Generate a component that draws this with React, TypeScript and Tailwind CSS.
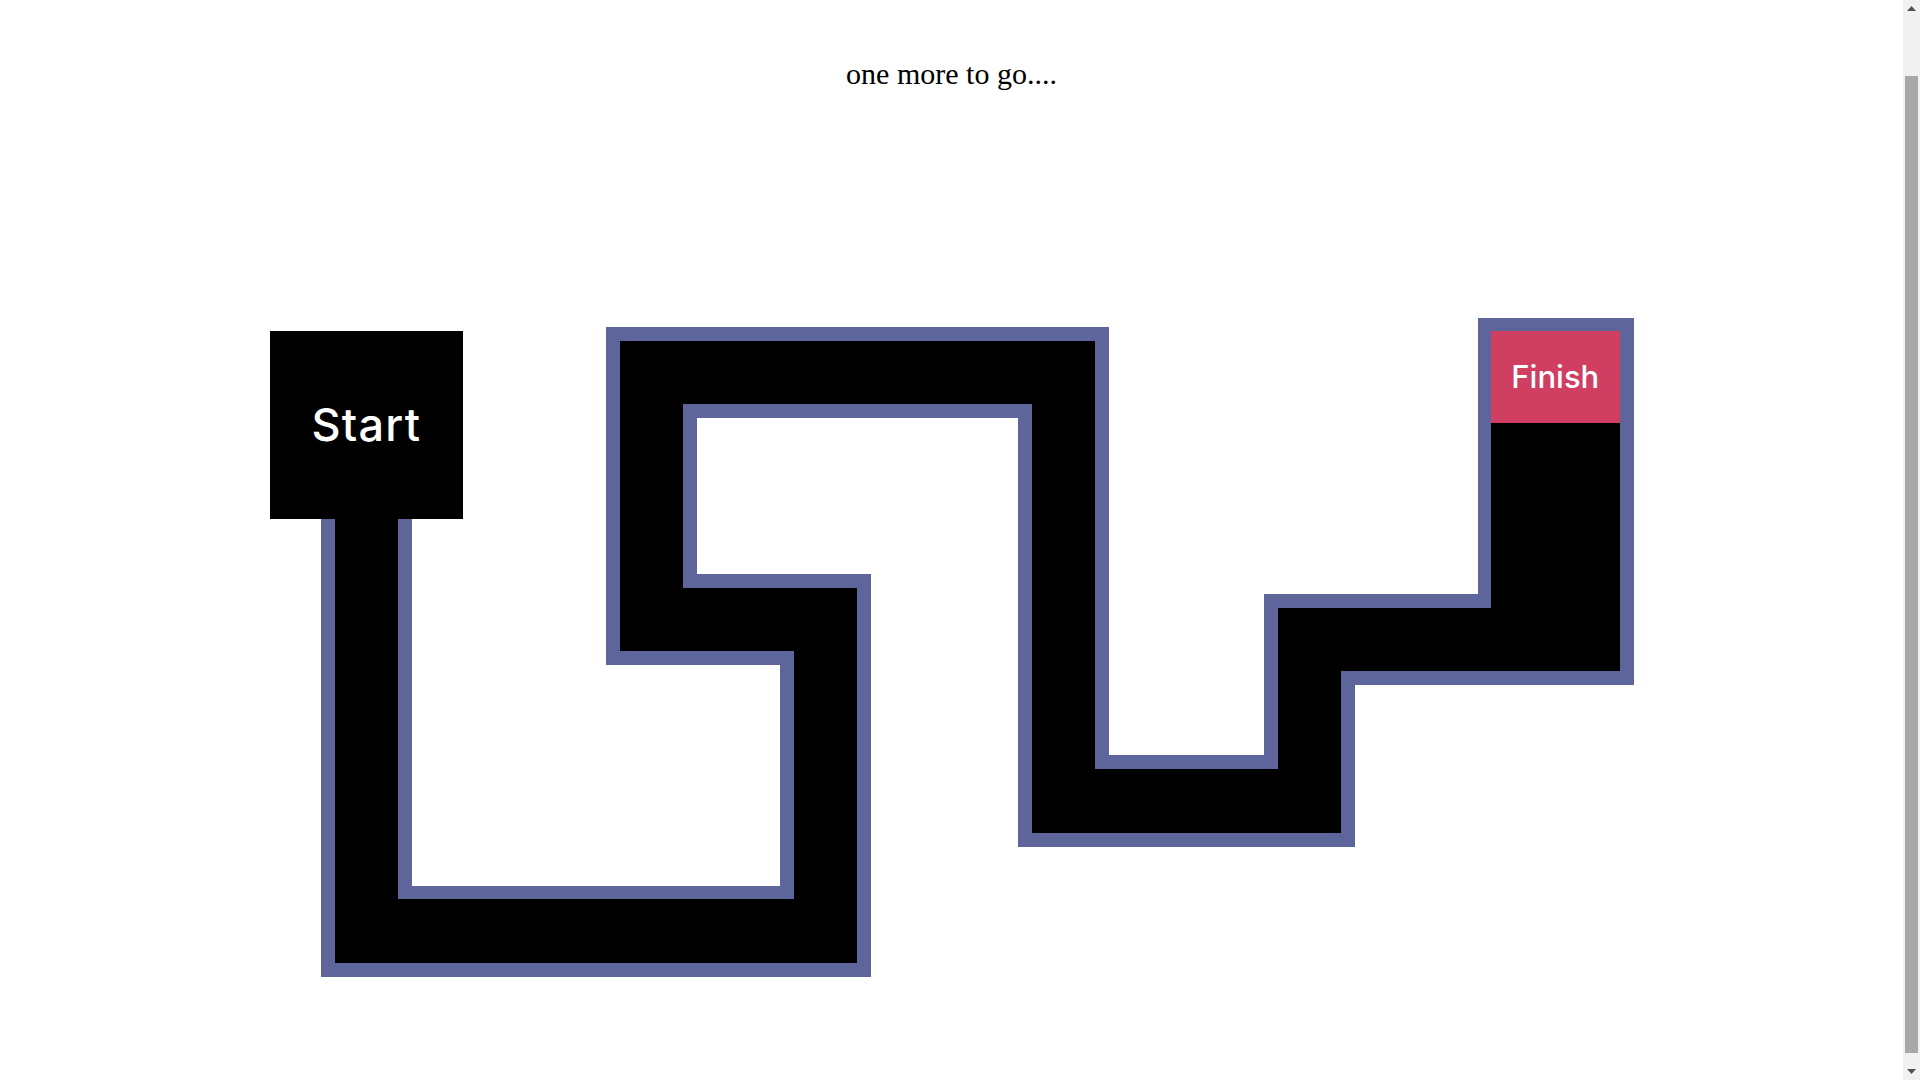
import React from "react";

const B = 13.6;

// black path segments in page coordinates: [x1, y1, x2, y2]
const segs: [number, number, number, number][] = [
  [333.7, 519, 397.3, 963],
  [333.7, 899.3, 856.3, 963],
  [793, 588, 856.3, 963],
  [619, 588, 856.3, 651.3],
  [619, 340.7, 682, 651.3],
  [619, 340.7, 1094.3, 404.3],
  [1030.7, 340.7, 1094.3, 833],
  [1030.7, 769, 1340.3, 833],
  [1276.7, 607.7, 1340.3, 833],
  [1276.7, 607.7, 1619.3, 671.3],
  [1490.3, 331.3, 1619.3, 671.3],
];

function Maze() {
  return (
    <svg
      className="absolute inset-0"
      width="1364"
      height="660"
      viewBox="269 318 1364 660"
      shapeRendering="crispEdges"
    >
      {segs.map(([x1, y1, x2, y2], i) => (
        <rect
          key={"b" + i}
          x={x1 - B}
          y={y1 - B}
          width={x2 - x1 + 2 * B}
          height={y2 - y1 + 2 * B}
          fill="#5e659b"
        />
      ))}
      {segs.map(([x1, y1, x2, y2], i) => (
        <rect
          key={"k" + i}
          x={x1}
          y={y1}
          width={x2 - x1}
          height={y2 - y1}
          fill="#000000"
        />
      ))}
    </svg>
  );
}

function Scrollbar() {
  return (
    <div className="flex h-[1080px] w-[17px] shrink-0 flex-col items-center bg-[#f1f1f1]">
      <div className="flex h-[17px] w-full items-center justify-center">
        <svg width="9" height="5" viewBox="0 0 9 5">
          <polygon points="4.5,0 9,5 0,5" fill="#505050" />
        </svg>
      </div>
      <div className="mt-[59px] h-[977px] w-[13px] bg-[#a8a8a8]" />
      <div className="mt-auto flex h-[17px] w-full items-center justify-center">
        <svg width="9" height="5" viewBox="0 0 9 5">
          <polygon points="0,0 9,0 4.5,5" fill="#505050" />
        </svg>
      </div>
    </div>
  );
}

export default function App() {
  return (
    <div className="flex h-[1080px] overflow-hidden bg-white">
      <main className="min-w-0 flex-1 font-['Liberation_Serif',serif] text-black">
        <h1 className="pt-[57px] text-center text-[30px] font-normal leading-[34px]">
          one more to go....
        </h1>
        <div className="relative mx-auto mt-[227px] h-[660px] w-[1364px]">
          <Maze />
          <div className="absolute left-0 top-[13.3px] flex h-[187.7px] w-[193.7px] items-center justify-center bg-black font-['Inter','Noto_Sans',sans-serif] text-[45px] font-medium tracking-[1.2px] text-white">
            Start
          </div>
          <div className="absolute left-[1221.3px] top-[13.3px] flex h-[91.7px] w-[129px] items-center justify-center bg-[#d03e62] font-['Inter','Noto_Sans',sans-serif] text-[31px] font-medium text-white">
            Finish
          </div>
        </div>
      </main>
      <Scrollbar />
    </div>
  );
}
